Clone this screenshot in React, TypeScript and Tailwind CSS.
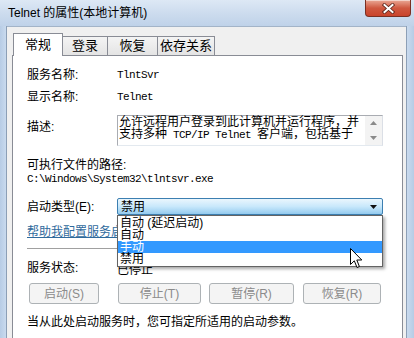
import type { ReactNode } from "react";

const sans = "font-['Liberation_Sans','Noto_Sans_CJK_SC',sans-serif]";
const mono = "font-['Liberation_Mono','Noto_Sans_CJK_SC',monospace]";

const tabs = [
  { label: "常规", width: "w-[50px]", active: true },
  { label: "登录", width: "w-[46px]", active: false },
  { label: "恢复", width: "w-[51px]", active: false },
  { label: "依存关系", width: "w-[58px]", active: false },
];

const startupOptions = ["自动 (延迟启动)", "自动", "手动", "禁用"];

const buttons = [
  { label: "启动(S)", className: "ml-[2px] w-[70px]" },
  { label: "停止(T)", className: "ml-[19px] w-[83px]" },
  { label: "暂停(R)", className: "ml-[8px] w-[85px]" },
  { label: "恢复(R)", className: "ml-[9px] w-[78px]" },
];

function CloseButton() {
  return (
    <div className="mr-[3px] ml-auto flex h-[17px] w-[46px] items-center justify-center rounded-b-[4px] border border-t-0 border-[#7a2f22] bg-gradient-to-b from-[#e9a896] via-[#cf5840] to-[#c9432b] shadow-[inset_0_1px_0_rgba(255,255,255,0.5)]">
      <svg width="13" height="11" viewBox="0 0 13 11">
        <path d="M2.5 2 L10.5 9 M10.5 2 L2.5 9" stroke="#5a2319" strokeWidth="3.6" strokeLinecap="square" />
        <path d="M2.5 2 L10.5 9 M10.5 2 L2.5 9" stroke="#ffffff" strokeWidth="2" strokeLinecap="square" />
      </svg>
    </div>
  );
}

function TabStrip() {
  return (
    <div className="flex h-[22px] items-end pl-[1px]">
      {tabs.map((tab) =>
        tab.active ? (
          <div
            key={tab.label}
            className={`relative z-10 -mb-px flex h-[23px] ${tab.width} items-center justify-center border border-b-0 border-[#898c95] bg-white text-[13px] leading-[16px]`}
          >
            {tab.label}
          </div>
        ) : (
          <div
            key={tab.label}
            className={`-ml-px flex h-[19px] ${tab.width} items-center justify-center border border-b-0 border-[#898c95] bg-gradient-to-b from-[#f4f4f4] to-[#e4e4e4] text-[13px] leading-[16px]`}
          >
            {tab.label}
          </div>
        )
      )}
    </div>
  );
}

function Row({ label, children }: { label: string; children: ReactNode }) {
  return (
    <div className="flex h-[22px] items-center">
      <div className="w-[90px] shrink-0">{label}</div>
      {children}
    </div>
  );
}

function DescriptionBox() {
  return (
    <div className="relative h-[31px] w-[266px] border border-[#a9acb2] border-r-[#dbdfe6] border-b-[#e3e9ef] bg-white pl-[1px] text-[12px] leading-[12px]">
      <div className="whitespace-nowrap">允许远程用户登录到此计算机并运行程序，并</div>
      <div className="whitespace-nowrap">
        支持多种
        <span className={`${mono} text-[11px] tracking-[-0.6px]`}> TCP/IP Telnet </span>
        客户端，包括基于
      </div>
      <div className="absolute top-0 right-0 flex h-full w-[17px] flex-col items-center justify-between bg-[#f3f3f3] py-[5px]">
        <svg width="7" height="4" viewBox="0 0 7 4">
          <path d="M0 4 L3.5 0 L7 4 Z" fill="#8a8a8a" />
        </svg>
        <svg width="7" height="4" viewBox="0 0 7 4">
          <path d="M0 0 L7 0 L3.5 4 Z" fill="#8a8a8a" />
        </svg>
      </div>
    </div>
  );
}

function StartupCombo() {
  return (
    <div className="relative h-[17px] w-[266px]">
      <div className="flex h-full items-center rounded-[2px] border border-[#3c7fb1] bg-gradient-to-b from-[#eaf6fd] via-[#c8e8fb] to-[#94cbef] pr-[5px] pl-[3px] leading-[14px]">
        <span>禁用</span>
        <svg className="ml-auto" width="7" height="4" viewBox="0 0 7 4">
          <path d="M0 0 L7 0 L3.5 4 Z" fill="#111111" />
        </svg>
      </div>
      <ul className="absolute top-full left-0 z-20 w-full border border-[#646464] bg-white py-px shadow-[2px_2px_3px_rgba(0,0,0,0.35)]">
        {startupOptions.map((option) => (
          <li
            key={option}
            className={`h-[12px] pl-[2px] text-[12px] leading-[12px] ${option === "手动" ? "bg-[#3399ff] text-white" : ""}`}
          >
            {option}
          </li>
        ))}
      </ul>
    </div>
  );
}

function Cursor() {
  return (
    <svg className="absolute top-[248px] left-[350px] z-30" width="13" height="21" viewBox="0 0 13 21">
      <path
        d="M0.5 0.5 L0.5 16.5 L4.3 12.8 L7 19.5 L9.4 18.5 L6.8 12 L11.8 12 Z"
        fill="#ffffff"
        stroke="#000000"
        strokeWidth="1"
        strokeLinejoin="round"
      />
    </svg>
  );
}

export default function App() {
  return (
    <div className={`relative h-[338px] w-[414px] overflow-hidden bg-[#c2d5eb] text-[12px] text-black ${sans}`}>
      {/* title bar */}
      <div className="flex h-[26px] items-start bg-gradient-to-b from-[#dde8f5] via-[#cddcee] to-[#bfd2e9]">
        <div className="pt-[5px] pl-[8px] text-[12px] leading-[16px]">Telnet 的属性(本地计算机)</div>
        <CloseButton />
      </div>

      <div className="flex h-[312px]">
        <div className="w-[7px] shrink-0 border-r border-[#8c9fb6] bg-gradient-to-r from-[#b7cce5] to-[#c9daee]" />
        <div className="flex-1 border-t border-[#a3b4c8] bg-[#f0f0f0] pt-[6px] pr-[3px] pl-[5px]">
          <TabStrip />

          <section className="h-[300px] border border-[#898c95] bg-white pt-[8px] pl-[14px]">
            <Row label="服务名称:">
              <span className={`${mono} text-[11px] tracking-[-0.6px]`}>TlntSvr</span>
            </Row>
            <Row label="显示名称:">
              <span className={`${mono} text-[11px] tracking-[-0.6px]`}>Telnet</span>
            </Row>

            <div className="mt-[7px] flex">
              <div className="w-[90px] shrink-0 pt-[4px] leading-[16px]">描述:</div>
              <DescriptionBox />
            </div>

            <div className="mt-[12px] h-[14px] leading-[14px]">可执行文件的路径:</div>
            <div className={`h-[14px] leading-[14px] ${mono} text-[11px] tracking-[-0.6px]`}>
              C:\Windows\System32\tlntsvr.exe
            </div>

            <div className="mt-[12px] flex h-[17px] items-center">
              <div className="w-[90px] shrink-0">启动类型(E):</div>
              <StartupCombo />
            </div>

            <div className="mt-[9px] h-[16px] leading-[16px] text-[#2f6a9c] underline">
              帮助我配置服务启动选项。
            </div>

            <div className="mt-[8px] h-[2px] w-[356px] border-t border-b border-t-[#a0a0a0] border-b-white" />

            <div className="mt-[10px] flex h-[16px] items-center leading-[16px]">
              <div className="w-[90px] shrink-0">服务状态:</div>
              <div className="pt-[3px]">已停止</div>
            </div>

            <div className="mt-[7px] flex h-[21px]">
              {buttons.map((button) => (
                <div
                  key={button.label}
                  className={`${button.className} flex items-center justify-center rounded-[3px] border border-[#adb2b5] bg-[#f4f4f4] text-[#8b8b8b]`}
                >
                  {button.label}
                </div>
              ))}
            </div>

            <div className="mt-[10px] h-[16px] whitespace-nowrap leading-[16px]">
              当从此处启动服务时，您可指定所适用的启动参数。
            </div>
          </section>
        </div>
        <div className="w-[8px] shrink-0 border-l border-[#8c9fb6] bg-gradient-to-r from-[#c9daee] to-[#b7cce5]" />
      </div>

      <Cursor />
    </div>
  );
}
